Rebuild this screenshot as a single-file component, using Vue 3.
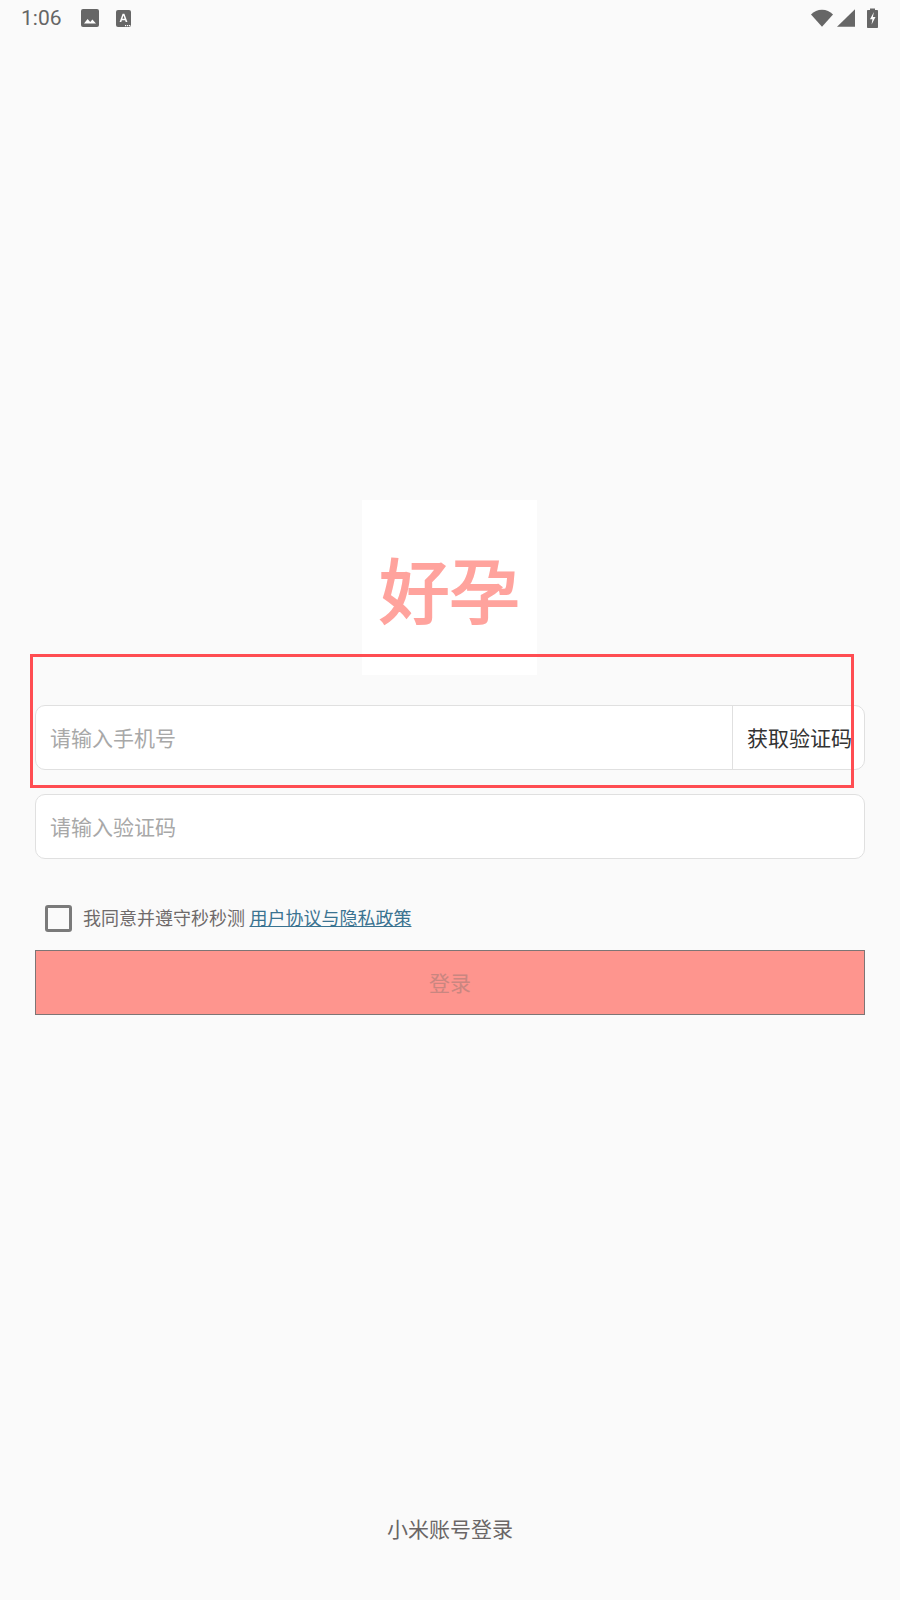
<template>
  <div class="page">
    <div class="status-bar">
      <span class="time">1:06</span>
      <svg class="ic-image" viewBox="0 0 18 18">
        <rect width="18" height="18" rx="2" fill="#666" />
        <path d="M3 14.5l3.6-4.6 2.6 3 2.2-2.4 3.6 4z" fill="#fff" />
      </svg>
      <svg class="ic-font" viewBox="0 0 15 17">
        <rect width="15" height="17" rx="2" fill="#666" />
        <path d="M3.6 12L6.6 3.8h1.8L11.4 12H9.7l-.6-1.8H5.900L5.300 12zM6.400 8.800h2.200L7.500 5.500z" fill="#fff" />
        <path d="M9 15h1.200v1.200H9zM11 15h1.200v1.200H11zM13 15h1.200v1.200H13z" fill="#fff" />
      </svg>
      <div class="status-right">
        <svg class="ic-wifi" viewBox="0 0 22 18">
          <path d="M0 5.600C2.900 2.500 6.700 .8 11 .8s8.100 1.700 11 4.800L11 17.800z" fill="#666" />
        </svg>
        <svg class="ic-signal" viewBox="0 0 18 18">
          <path d="M0 17.800L18 .2v17.600z" fill="#666" />
        </svg>
        <svg class="ic-battery" viewBox="0 0 11 20">
          <path d="M3 2V.6h5V2h2c.6 0 1 .4 1 1v16c0 .6-.4 1-1 1H1c-.6 0-1-.4-1-1V3c0-.6.400-1 1-1z" fill="#666" />
          <path d="M6.900 4L3 11.300h2.400l-.8 5.200 3.900-7.500H5.900z" fill="#fff" />
        </svg>
      </div>
    </div>

    <div class="content">
      <div class="logo"><span>好孕</span></div>

      <div class="field phone">
        <span class="placeholder">请输入手机号</span>
        <span class="code-btn">获取验证码</span>
      </div>
      <div class="field code">
        <span class="placeholder">请输入验证码</span>
      </div>

      <div class="agree">
        <span class="checkbox"></span>
        <span class="agree-text">我同意并遵守秒秒测 <a class="agree-link">用户协议与隐私政策</a></span>
      </div>

      <div class="login-btn"><span>登录</span></div>

      <div class="mi-login">小米账号登录</div>
    </div>

    <div class="highlight"></div>
  </div>
</template>

<script setup>
</script>

<style>
html,
body {
  margin: 0;
  background: #fafafa;
}
</style>

<style scoped>
.page {
  position: relative;
  width: 900px;
  height: 1600px;
  overflow: hidden;
  background: #fafafa;
  display: flex;
  flex-direction: column;
  font-family: Roboto, "Noto Sans CJK SC", sans-serif;
}

.status-bar {
  height: 36px;
  display: flex;
  align-items: center;
  padding: 0 22px 0 21px;
  box-sizing: border-box;
  flex-shrink: 0;
}

.time {
  font-size: 21px;
  color: #666;
  width: 60px;
}

.ic-image {
  width: 18px;
  height: 18px;
}

.ic-font {
  width: 15px;
  height: 17px;
  margin-left: 17px;
}

.status-right {
  margin-left: auto;
  display: flex;
  align-items: center;
}

.ic-wifi {
  width: 22px;
  height: 18px;
}

.ic-signal {
  width: 18px;
  height: 18px;
  margin-left: 4px;
}

.ic-battery {
  width: 11px;
  height: 20px;
  margin-left: 12px;
}

.content {
  flex: 1;
  display: flex;
  flex-direction: column;
  padding: 0 35px;
}

.logo {
  width: 175px;
  height: 175px;
  margin: 464px 0 0 327px;
  background: #fff;
  display: flex;
  align-items: center;
  justify-content: center;
}

.logo span {
  font-family: "Noto Sans CJK SC", sans-serif;
  font-size: 70px;
  line-height: 1;
  color: #ffa39d;
  -webkit-text-stroke: 2px #ffa39d;
}

.field {
  height: 65px;
  box-sizing: border-box;
  background: #fff;
  border: 1px solid #e0e0e0;
  border-radius: 10px;
  display: flex;
  align-items: center;
  padding-left: 15px;
  font-size: 21px;
}

.phone {
  margin-top: 30px;
}

.code {
  margin-top: 24px;
}

.placeholder {
  flex: 1;
  color: #a8a8a8;
  margin-left: -1px;
  margin-top: -1px;
}

.code-btn {
  align-self: stretch;
  width: 132px;
  box-sizing: border-box;
  border-left: 1px solid #e0e0e0;
  padding: 0 0 2px 14px;
  display: flex;
  align-items: center;
  white-space: nowrap;
  color: #333;
}

.agree {
  margin-top: 46px;
  padding-left: 10px;
  display: flex;
  align-items: center;
  height: 27px;
}

.checkbox {
  width: 27px;
  height: 27px;
  box-sizing: border-box;
  border: 3px solid #7a7a7a;
  border-radius: 3px;
  flex-shrink: 0;
}

.agree-text {
  margin-left: 11px;
  margin-top: -3px;
  font-size: 18px;
  color: #6f6a6a;
  white-space: nowrap;
}

.agree-link {
  color: #3a7391;
  text-decoration: underline;
}

.login-btn {
  margin-top: 18px;
  height: 65px;
  box-sizing: border-box;
  background: #fe958e;
  border: 1px solid #7d7575;
  display: flex;
  align-items: center;
  justify-content: center;
  font-size: 21px;
  color: #c98680;
}

.login-btn span {
  margin-top: -2px;
}

.mi-login {
  margin-top: auto;
  margin-bottom: 57px;
  text-align: center;
  font-size: 21px;
  color: #6a6666;
}

/* red marker drawn over the phone row */
.highlight {
  position: absolute;
  left: 30px;
  top: 654px;
  width: 824px;
  height: 134px;
  box-sizing: border-box;
  border: 3px solid #ff4d52;
  pointer-events: none;
}
</style>
